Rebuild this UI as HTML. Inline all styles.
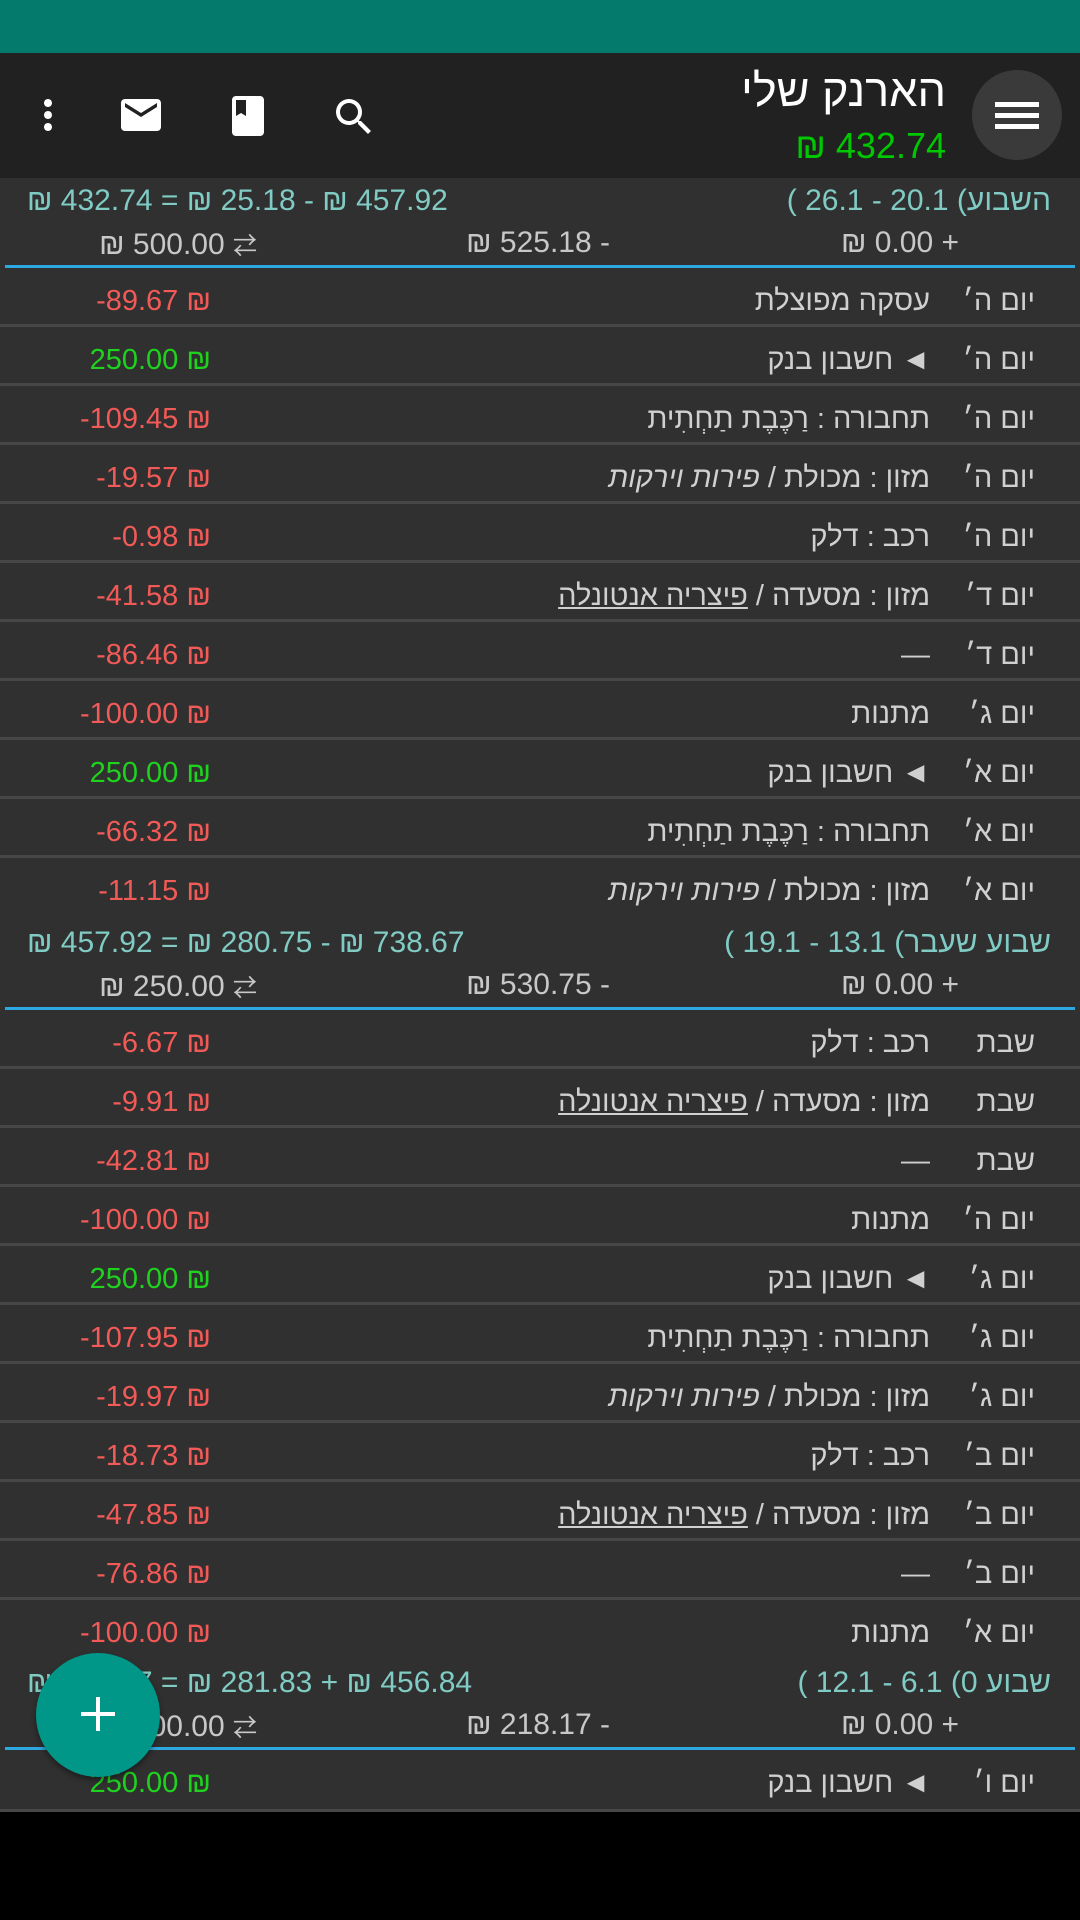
<!DOCTYPE html>
<html><head><meta charset="utf-8"><style>
*{margin:0;padding:0;box-sizing:border-box}
body{width:1080px;height:1920px;background:#000;position:relative;overflow:hidden;font-family:"Liberation Sans Narrow","Liberation Sans","Noto Sans CJK SC",sans-serif}
.status{position:absolute;left:0;top:0;width:1080px;height:53px;background:#037a6c}
.bar{position:absolute;left:0;top:53px;width:1080px;height:125px;background:#212121}
.list{position:absolute;left:0;top:178px;width:1080px;background:#303030}
.hdr{position:relative;height:90px;border-bottom:3px solid #2ea8e0;margin:0 5px}
.hdr div{position:absolute;white-space:nowrap;font-size:30px}
.l1{top:6px;color:#80cbc4}
.l2{top:48px;color:#c8c8c8}
.row{position:relative;height:59px;border-bottom:3px solid #474747;font-size:29px;color:#d0d0d0}
.row span{position:absolute;top:17px;white-space:nowrap}
.last{border-bottom:none;height:60px}
.day{right:45px;direction:rtl}
.desc{right:150px;direction:rtl}
.amt{right:869px;direction:ltr}
.r{color:#f25a57}.g{color:#1ed21e}
i{font-style:italic}
u{text-decoration:underline}
.he{direction:rtl;unicode-bidi:isolate}
.ib{display:inline-block;direction:ltr}
</style></head><body>
<div class="status"></div>
<div class="bar">
  <div style="position:absolute;left:972px;top:17px;width:90px;height:90px;border-radius:50%;background:#3a3a3a"></div>
  <div style="position:absolute;left:995px;top:49px;width:44px;height:5px;background:#fff;box-shadow:0 11px 0 #fff,0 22px 0 #fff"></div>
  <div style="position:absolute;right:134px;top:12px;font-size:45px;color:#fff;direction:rtl">הארנק שלי</div>
  <div style="position:absolute;right:134px;top:72px;font-size:36px;color:#00c800;direction:ltr">₪ 432.74</div>
  <svg style="position:absolute;left:330px;top:40px" width="48" height="48" viewBox="0 0 24 24"><path fill="#fff" d="M15.5 14h-.79l-.28-.27A6.47 6.47 0 0 0 16 9.5 6.5 6.5 0 1 0 9.5 16c1.61 0 3.090-.59 4.23-1.570l.27.28v.79l5 4.99L20.49 19l-4.99-5zm-6 0C7.01 14 5 11.99 5 9.5S7.01 5 9.5 5 14 7.01 14 9.5 11.99 14 9.5 14z"/></svg>
  <svg style="position:absolute;left:224px;top:39px" width="48" height="48" viewBox="0 0 24 24"><path fill="#fff" d="M18 2H6c-1.1 0-2 .9-2 2v16c0 1.1.9 2 2 2h12c1.1 0 2-.9 2-2V4c0-1.1-.9-2-2-2zM6 4h5v8l-2.5-1.5L6 12V4z"/></svg>
  <svg style="position:absolute;left:117px;top:38px" width="48" height="48" viewBox="0 0 24 24"><path fill="#fff" d="M20 4H4c-1.1 0-2 .9-2 2v12c0 1.1.9 2 2 2h16c1.1 0 2-.9 2-2V6c0-1.1-.9-2-2-2zm0 4l-8 5-8-5V6l8 5 8-5v2z"/></svg>
  <svg style="position:absolute;left:24px;top:38px" width="48" height="48" viewBox="0 0 24 24"><path fill="#fff" d="M12 8c1.1 0 2-.9 2-2s-.9-2-2-2-2 .9-2 2 .9 2 2 2zm0 2c-1.1 0-2 .9-2 2s.9 2 2 2 2-.9 2-2-.9-2-2-2zm0 6c-1.1 0-2 .9-2 2s.9 2 2 2 2-.9 2-2-.9-2-2-2z"/></svg>
</div>
<div class="list">
  <div class="hdr">
    <div class="l1" style="left:22px;direction:ltr">₪ 432.74 = ₪ 25.18 - ₪ 457.92</div>
    <div class="l1" style="right:24px;direction:ltr"><span class="ib">( 26.1 - 20.1 (</span><span class="he">השבוע</span></div>
    <div class="l2" style="right:116px;direction:ltr">₪ 0.00 +</div>
    <div class="l2" style="right:465px;direction:ltr">₪ 525.18 -</div>
    <div class="l2" style="right:818px;direction:ltr">₪ 500.00 <span style="font-size:24px">⇄</span></div>
  </div>
  <div class="row"><span class="day">יום ה׳</span><span class="desc">עסקה מפוצלת</span><span class="amt r">-89.67 ₪</span></div>
  <div class="row"><span class="day">יום ה׳</span><span class="desc">◄ חשבון בנק</span><span class="amt g">250.00 ₪</span></div>
  <div class="row"><span class="day">יום ה׳</span><span class="desc">תחבורה : רַכֶּבֶת תַחְתִית</span><span class="amt r">-109.45 ₪</span></div>
  <div class="row"><span class="day">יום ה׳</span><span class="desc">מזון : מכולת / <i>פירות וירקות</i></span><span class="amt r">-19.57 ₪</span></div>
  <div class="row"><span class="day">יום ה׳</span><span class="desc">רכב : דלק</span><span class="amt r">-0.98 ₪</span></div>
  <div class="row"><span class="day">יום ד׳</span><span class="desc">מזון : מסעדה / <u>פיצריה אנטונלה</u></span><span class="amt r">-41.58 ₪</span></div>
  <div class="row"><span class="day">יום ד׳</span><span class="desc">—</span><span class="amt r">-86.46 ₪</span></div>
  <div class="row"><span class="day">יום ג׳</span><span class="desc">מתנות</span><span class="amt r">-100.00 ₪</span></div>
  <div class="row"><span class="day">יום א׳</span><span class="desc">◄ חשבון בנק</span><span class="amt g">250.00 ₪</span></div>
  <div class="row"><span class="day">יום א׳</span><span class="desc">תחבורה : רַכֶּבֶת תַחְתִית</span><span class="amt r">-66.32 ₪</span></div>
  <div class="row last" style="height:62px"><span class="day">יום א׳</span><span class="desc">מזון : מכולת / <i>פירות וירקות</i></span><span class="amt r">-11.15 ₪</span></div>
  <div class="hdr">
    <div class="l1" style="left:22px;direction:ltr">₪ 457.92 = ₪ 280.75 - ₪ 738.67</div>
    <div class="l1" style="right:24px;direction:ltr"><span class="ib">( 19.1 - 13.1 (</span><span class="he">שבוע שעבר</span></div>
    <div class="l2" style="right:116px;direction:ltr">₪ 0.00 +</div>
    <div class="l2" style="right:465px;direction:ltr">₪ 530.75 -</div>
    <div class="l2" style="right:818px;direction:ltr">₪ 250.00 <span style="font-size:24px">⇄</span></div>
  </div>
  <div class="row"><span class="day">שבת</span><span class="desc">רכב : דלק</span><span class="amt r">-6.67 ₪</span></div>
  <div class="row"><span class="day">שבת</span><span class="desc">מזון : מסעדה / <u>פיצריה אנטונלה</u></span><span class="amt r">-9.91 ₪</span></div>
  <div class="row"><span class="day">שבת</span><span class="desc">—</span><span class="amt r">-42.81 ₪</span></div>
  <div class="row"><span class="day">יום ה׳</span><span class="desc">מתנות</span><span class="amt r">-100.00 ₪</span></div>
  <div class="row"><span class="day">יום ג׳</span><span class="desc">◄ חשבון בנק</span><span class="amt g">250.00 ₪</span></div>
  <div class="row"><span class="day">יום ג׳</span><span class="desc">תחבורה : רַכֶּבֶת תַחְתִית</span><span class="amt r">-107.95 ₪</span></div>
  <div class="row"><span class="day">יום ג׳</span><span class="desc">מזון : מכולת / <i>פירות וירקות</i></span><span class="amt r">-19.97 ₪</span></div>
  <div class="row"><span class="day">יום ב׳</span><span class="desc">רכב : דלק</span><span class="amt r">-18.73 ₪</span></div>
  <div class="row"><span class="day">יום ב׳</span><span class="desc">מזון : מסעדה / <u>פיצריה אנטונלה</u></span><span class="amt r">-47.85 ₪</span></div>
  <div class="row"><span class="day">יום ב׳</span><span class="desc">—</span><span class="amt r">-76.86 ₪</span></div>
  <div class="row last"><span class="day">יום א׳</span><span class="desc">מתנות</span><span class="amt r">-100.00 ₪</span></div>
  <div class="hdr">
    <div class="l1" style="left:22px;direction:ltr">₪ 738.67 = ₪ 281.83 + ₪ 456.84</div>
    <div class="l1" style="right:24px;direction:ltr"><span class="ib">( 12.1 - 6.1 (</span><span class="he">שבוע 0</span></div>
    <div class="l2" style="right:116px;direction:ltr">₪ 0.00 +</div>
    <div class="l2" style="right:465px;direction:ltr">₪ 218.17 -</div>
    <div class="l2" style="right:818px;direction:ltr">₪ 500.00 <span style="font-size:24px">⇄</span></div>
  </div>
  <div class="row" style="height:62px"><span class="day">יום ו׳</span><span class="desc">◄ חשבון בנק</span><span class="amt g">250.00 ₪</span></div>
</div>
<div style="position:absolute;left:36px;top:1653px;width:124px;height:124px;border-radius:50%;background:#009688;box-shadow:0 3px 6px rgba(0,0,0,.4)"></div>
<div style="position:absolute;left:81px;top:1712px;width:34px;height:4px;background:#fff"></div>
<div style="position:absolute;left:96px;top:1697px;width:4px;height:34px;background:#fff"></div>
</body></html>
